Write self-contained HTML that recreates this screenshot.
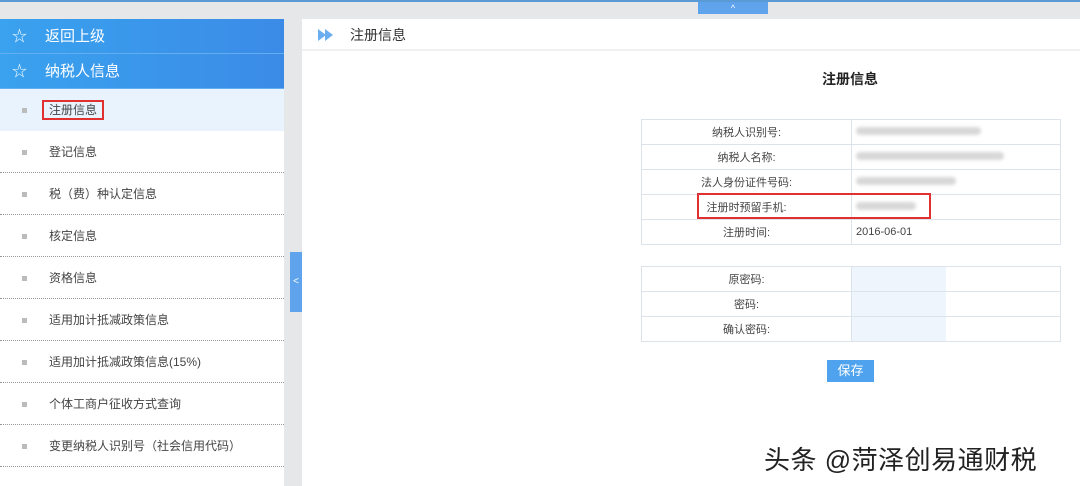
<!DOCTYPE html><html><head><meta charset="utf-8"><style>
*{margin:0;padding:0;box-sizing:border-box}
body{width:1080px;height:486px;overflow:hidden;background:#e6e7e8;font-family:"Liberation Sans","Noto Sans CJK SC",sans-serif;position:relative;color:#333}
.topline{position:absolute;left:0;top:0;width:1080px;height:2px;background:#5b9bd5}
.tab{position:absolute;left:698px;top:2px;width:70px;height:12px;background:#5ea3ec;color:#fff;font-size:9px;text-align:center;line-height:12px}
.side{position:absolute;left:0;top:19px;width:284px;height:467px;background:#fff}
.hd{height:35px;background:linear-gradient(90deg,#3aa2ef,#3b8be6);color:#fff;font-size:15px;line-height:35px;padding-left:12px;border-bottom:1px solid #62aef0}
.hd span{display:inline-block;width:33px}
.it{height:42px;line-height:42px;font-size:12px;color:#444;padding-left:22px;border-bottom:1px dotted #999}
.it i{display:inline-block;width:5px;height:5px;background:#bbb;margin-right:22px;vertical-align:middle}
.it.act{background:#e9f3fd;border-bottom:none;height:42px}
.redbox{border:2px solid #e03030;padding:1px 5px;margin-left:-7px}
.tog{position:absolute;left:290px;top:252px;width:12px;height:60px;background:#5ea3ec;color:#fff;font-size:10px;line-height:60px;text-align:center}
.main{position:absolute;left:302px;top:19px;width:778px;height:467px;background:#fff}
.mh{height:32px;border-bottom:2px solid #eef0f2;font-size:14px;line-height:32px;padding-left:48px;position:relative}
.mh svg{position:absolute;left:16px;top:10px}
.title{position:absolute;left:520px;top:50px;font-size:14px;font-weight:bold;color:#222}
table{position:absolute;border-collapse:collapse;font-size:11px;color:#444}
td{border:1px solid #dde3ea;height:25px}
td.l{width:210px;text-align:center}
td.r{width:209px;padding-left:4px}
.blur{display:inline-block;height:8px;background:#d8d8d8;border-radius:4px;filter:blur(1.5px)}
.btn{position:absolute;left:525px;top:341px;width:47px;height:22px;background:#4fa3ee;color:#fff;font-size:13px;text-align:center;line-height:22px}
.wm{position:absolute;left:764px;top:440px;font-size:26px;color:#222;letter-spacing:0.5px;text-shadow:0 0 2px #fff,0 0 2px #fff}
</style></head><body>
<div class="topline"></div><div class="tab">^</div>
<div class="side">
<div class="hd"><span>☆</span>返回上级</div>
<div class="hd"><span>☆</span>纳税人信息</div>
<div class="it act"><i></i><span class="redbox">注册信息</span></div>
<div class="it"><i></i>登记信息</div>
<div class="it"><i></i>税（费）种认定信息</div>
<div class="it"><i></i>核定信息</div>
<div class="it"><i></i>资格信息</div>
<div class="it"><i></i>适用加计抵减政策信息</div>
<div class="it"><i></i>适用加计抵减政策信息(15%)</div>
<div class="it"><i></i>个体工商户征收方式查询</div>
<div class="it"><i></i>变更纳税人识别号（社会信用代码）</div>
</div>
<div class="tog">&lt;</div>
<div class="main">
<div class="mh"><svg width="16" height="12"><path d="M0 0L8 6L0 12Z M7 0L15 6L7 12Z" fill="#6aaef0"/></svg>注册信息</div>
<div class="title">注册信息</div>
<table style="left:339px;top:100px">
<tr><td class="l">纳税人识别号:</td><td class="r"><span class="blur" style="width:125px"></span></td></tr>
<tr><td class="l">纳税人名称:</td><td class="r"><span class="blur" style="width:148px"></span></td></tr>
<tr><td class="l">法人身份证件号码:</td><td class="r"><span class="blur" style="width:100px"></span></td></tr>
<tr><td class="l">注册时预留手机:</td><td class="r"><span class="blur" style="width:60px"></span></td></tr>
<tr><td class="l">注册时间:</td><td class="r">2016-06-01</td></tr>
</table>
<div style="position:absolute;left:395px;top:174px;width:234px;height:26px;border:2px solid #e03030"></div>
<table style="left:339px;top:247px">
<tr><td class="l">原密码:</td><td class="r" style="padding:0"><div style="width:94px;height:24px;background:#eef5fd"></div></td></tr>
<tr><td class="l">密码:</td><td class="r" style="padding:0"><div style="width:94px;height:24px;background:#eef5fd"></div></td></tr>
<tr><td class="l">确认密码:</td><td class="r" style="padding:0"><div style="width:94px;height:24px;background:#eef5fd"></div></td></tr>
</table>
<div class="btn">保存</div>
</div>
<div class="wm">头条 @菏泽创易通财税</div>
</body></html>
